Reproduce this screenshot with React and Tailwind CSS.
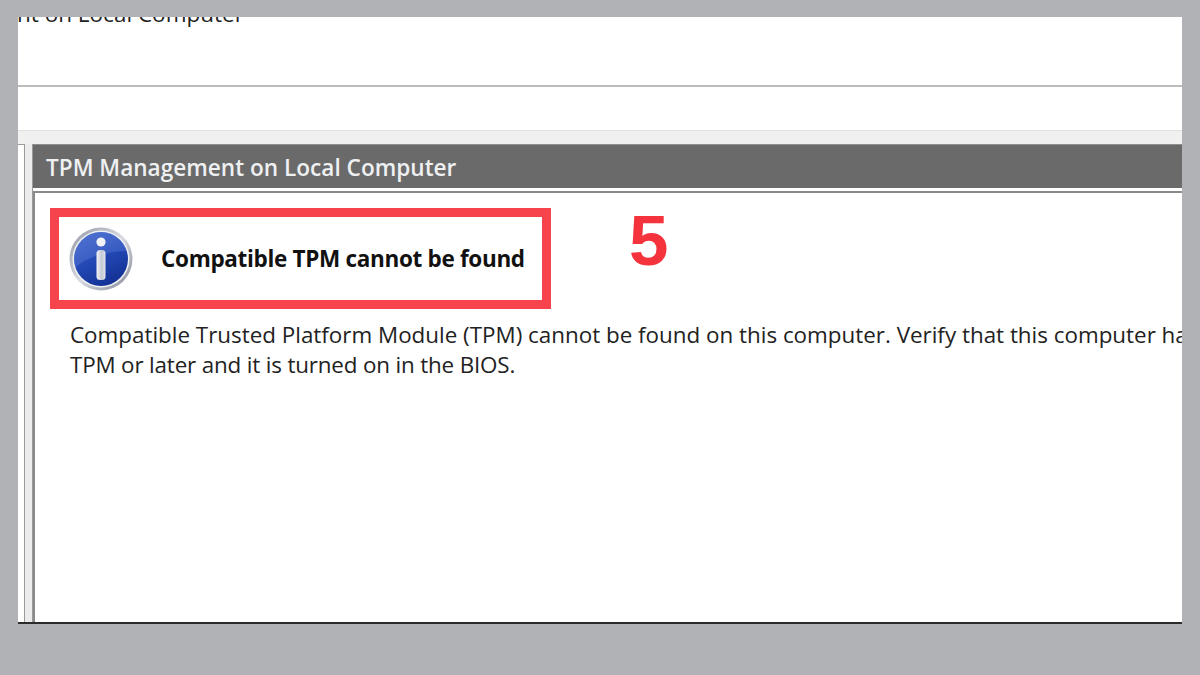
function InfoIcon() {
  return (
    <svg width="64" height="64" viewBox="0 0 64 64" className="shrink-0">
      <defs>
        <linearGradient id="ring" x1="0" y1="0" x2="1" y2="1">
          <stop offset="0" stopColor="#8e94a0" />
          <stop offset="0.5" stopColor="#d8dbe1" />
          <stop offset="1" stopColor="#7f8592" />
        </linearGradient>
        <linearGradient id="disc" x1="0.2" y1="0" x2="0.7" y2="1">
          <stop offset="0" stopColor="#3f63c8" />
          <stop offset="0.5" stopColor="#2348b4" />
          <stop offset="1" stopColor="#122f92" />
        </linearGradient>
        <linearGradient id="bar" x1="0" y1="0" x2="1" y2="0">
          <stop offset="0" stopColor="#f2f3f7" />
          <stop offset="0.6" stopColor="#c4c8d2" />
          <stop offset="1" stopColor="#e6e8ee" />
        </linearGradient>
      </defs>
      <circle cx="32" cy="32" r="31.5" fill="url(#ring)" />
      <circle cx="32" cy="32" r="28.5" fill="#eef0f4" />
      <circle cx="32" cy="32" r="27" fill="url(#disc)" />
      <path d="M7 40 C18 30 34 25 58 24 C54 12 44 5 32 5 C17 5 5 17 5 32 C5 35 6 37 7 40 Z" fill="#6d8fe4" opacity="0.3" />
      <circle cx="32" cy="15" r="4.6" fill="#f1f3f8" />
      <rect x="27.5" y="23" width="9" height="30" rx="3.5" fill="url(#bar)" />
    </svg>
  )
}

export default function App() {
  return (
    <div className="w-[1200px] h-[675px] bg-[#b1b2b6] pt-[17px] pl-[18px] pr-[18px] overflow-hidden font-['Open_Sans',sans-serif]">
      <div className="h-[607px] flex flex-col bg-white border-b-2 border-[#2b2b2b] overflow-hidden">
        <div className="h-[70px] shrink-0 border-b-2 border-[#bcbcbc] overflow-hidden">
          <p className="-mt-[18px] -ml-[1px] text-[22.5px] leading-[30px] font-medium text-[#222] whitespace-nowrap">nt on Local Computer</p>
        </div>
        <div className="h-[44px] shrink-0 border-b border-[#e2e2e2]" />
        <div className="h-[13px] shrink-0 bg-[#f0f0f0]" />
        <div className="flex-1 min-h-0 flex">
          <div className="w-[7px] shrink-0 bg-white border-r border-[#9c9c9c] border-t" />
          <div className="w-[8px] shrink-0 bg-[#ececec] border-r border-[#9a9a9a]" />
          <div className="flex-1 min-w-0 flex flex-col">
            <div className="h-[44px] shrink-0 bg-[#6a6a6a] flex items-center pl-[13px] pt-[2px] border-t border-[#8f8f8f]">
              <h1 className="text-[22.6px] font-semibold text-[#eef0f2] whitespace-nowrap">TPM Management on Local Computer</h1>
            </div>
            <div className="h-[3px] shrink-0 bg-white" />
            <div className="flex-1 min-h-0 bg-white border-t-2 border-l-2 border-[#8a8a8a] pl-[15px] pt-[15px]">
              <div className="flex items-start">
                <div className="w-[501px] h-[101px] shrink-0 border-[9px] border-[#f7434b] flex items-center pl-[10px] gap-[28px]">
                  <InfoIcon />
                  <span className="text-[22.5px] font-bold text-[#111] whitespace-nowrap tracking-[-0.32px]">Compatible TPM cannot be found</span>
                </div>
                <span className="ml-[78px] -mt-[12px] font-['Liberation_Sans',sans-serif] font-bold text-[71px] leading-[90px] text-[#f5333d]">5</span>
              </div>
              <div className="mt-[11px] ml-[20px] text-[22.4px] leading-[30px] text-[#222] whitespace-nowrap">
                <p>Compatible Trusted Platform Module (TPM) cannot be found on this computer. Verify that this computer has</p>
                <p className="tracking-[-0.16px]">TPM or later and it is turned on in the BIOS.</p>
              </div>
            </div>
          </div>
        </div>
      </div>
    </div>
  )
}
